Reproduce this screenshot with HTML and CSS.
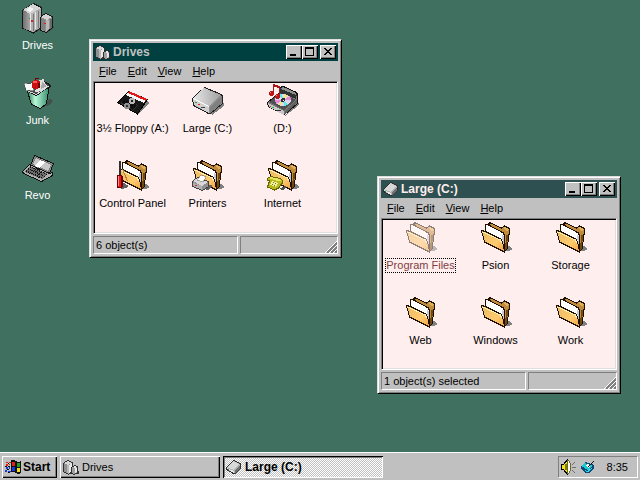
FILE: index.html
```html
<!DOCTYPE html>
<html lang="en">
<head>
<meta charset="utf-8">
<title>Desktop</title>
<link rel="stylesheet" href="styles.css">
</head>
<body>
<svg class="sprite" aria-hidden="true">
  <defs>
    <linearGradient id="flap" x1="0" y1="0" x2="1" y2="1"><stop offset="0" stop-color="#e8b860"/><stop offset=".6" stop-color="#ffcb70"/><stop offset="1" stop-color="#f0a040"/></linearGradient>
    <linearGradient id="tower"><stop offset="0" stop-color="#707070"/><stop offset="1" stop-color="#a8a8a8"/></linearGradient>
    <linearGradient id="lid" x1="0" y1="0" x2="1" y2="0"><stop offset="0" stop-color="#e8e8e8"/><stop offset="1" stop-color="#a0a0a0"/></linearGradient>
    <linearGradient id="bin"><stop offset="0" stop-color="#287858"/><stop offset=".35" stop-color="#b8f8d8"/><stop offset="1" stop-color="#308868"/></linearGradient>
  </defs>
  <symbol id="folder" viewBox="0 0 32 32">
    <path fill="#808080" d="M27 25h3v1h1v1h1v2h-2v1h-4z"/>
    <path fill="#c08c3c" stroke="#201000" d="M9.5 1.5l12 5.500 3-2 5 2.500v5l-1 2-1 13-3 3-15-11z"/>
    <path fill="#704810" d="M26 14h2l-1 13-2 3z"/>
    <path fill="#e0b058" d="M23 7l2-1 4 2v1l-3 1z"/>
    <path fill="#fff" stroke="#201000" d="M5.500 3.500h2l16 8.500 1 3v14l-18-9z"/>
    <path fill="none" stroke="#201000" d="M8.500 2v2l14 7.500"/>
    <path fill="none" stroke="#c8c8d8" d="M22.500 14v5M23.500 15v10"/>
    <path fill="url(#flap)" stroke="#201000" d="M1.500 9.500l4 1 15 7.500 2 2.500 2 10.500-20-10z"/>
    <path fill="none" stroke="#fff0b0" d="M2.500 11l18 8 1 3"/>
  </symbol>
  <symbol id="drive" viewBox="0 0 32 32">
    <path fill="#808080" d="M20 31l12-9v-3l-4 2-9 8z"/>
    <path fill="#909090" stroke="#202020" d="M.5 14.500L12.500 3.500l17 7 1 2v7L18.500 29.500l-2 0L1.500 21.500z"/>
    <path fill="#d0d0d0" d="M1 15l16 8v6L2 21z"/>
    <path fill="#808080" d="M18 23l12-11v7L18 29z"/>
    <path fill="url(#lid)" d="M1 14L12 4l17 7-12 11z"/>
    <path fill="none" stroke="#fff" d="M1 14.500l16 8"/>
    <path fill="#20a040" d="M3 18h2v1H3z"/><path fill="#e02020" d="M6 20h2v1H6z"/>
    <path fill="#404040" d="M9 23h4v1H9z"/>
  </symbol>
  <symbol id="drives" viewBox="0 0 32 32">
    <path fill="#444" fill-opacity=".7" d="M12 31l8-5v-4h-5zM25 31l7-5v-2l-4 1z"/>
    <path fill="#707070" stroke="#181818" d="M.5 8.500L11.500 1.500l8 4v20l-8 5.500-11-5z"/>
    <path fill="url(#tower)" d="M1 9l7 3v17l-7-3z"/>
    <path fill="#b0b0b0" d="M8 12l11-6v19l-8 5-3-1z"/>
    <path fill="#d4d4d4" d="M1 8l10-6 8 4-11 6z"/>
    <path fill="#787878" d="M11 12h1v17h-1zM16 9h1v17h-1z"/>
    <path fill="#e8e8e8" d="M8 12h1v16H8zM13 10h1v17h-1z"/>
    <path fill="#f4f4f4" d="M4 8l4-3 4 2-4 3z"/>
    <path fill="#e02020" d="M9 18h2v2H9z"/><path fill="#109040" d="M7 16h1v1H7z"/>
    <path fill="#909090" stroke="#181818" d="M18.500 15.500l5-4 7 3v11l-6 5-6-2z"/>
    <path fill="#d4d4d4" d="M19 15l5-3 6 3-5 3z"/>
    <path fill="#808080" d="M19 16l4 2v11l-4-2z"/><path fill="#b8b8b8" d="M24 18h3v9l-3 2z"/><path fill="#686868" d="M28 17h2v8l-2 2z"/>
    <path fill="#e02020" d="M22 21h2v1h-2z"/>
  </symbol>
  <symbol id="junk" viewBox="0 0 32 32">
    <path fill="#444" fill-opacity=".7" d="M20 31l9-4 2-4-4-1z"/>
    <path fill="url(#bin)" stroke="#101010" d="M5.500 14.500l9 4 13-10-3 18-6 5-9-4z"/>
    <path fill="#484848" stroke="#181818" d="M4.500 13.500l5-6 12-3 6 3 1 2-14 8z"/>
    <path fill="none" stroke="#d8d8d8" d="M4.500 13.500l10 4 13-9"/>
    <path fill="#f8f8f8" stroke="#404040" stroke-width=".5" d="M2 6l6 1 2-2 2 9-8-1z"/>
    <path fill="#e0e0e0" d="M15 6l2-3h3l1-2 2 5 3 4-6 4-7 1z"/>
    <path fill="#a8a8a8" d="M20 5l5 4-6 3z"/>
    <path fill="#c81010" d="M10 4h2V3h4v1h2v7h-2v1h-4v-1h-2z"/>
    <path fill="#f86060" d="M11 4h4v2h-4z"/><path fill="#700000" d="M16 6h2v5h-2zM13 1h1v2h-1zM14 1h3v1h-3z"/>
  </symbol>
  <symbol id="revo" viewBox="0 0 32 32">
    <path fill="#444" fill-opacity=".7" d="M20 30l11-7v-3l-3 0z"/>
    <path fill="#909090" stroke="#101010" d="M12.500 3.500l19 8-4 10-19-8z"/>
    <path fill="#c8c8c8" stroke="#787878" d="M13.500 5.500l16 7-3 7-16-7z"/>
    <path fill="#fff" d="M18 8l5 2-5 6-5-2z"/>
    <path fill="#b0b0b0" stroke="#101010" d="M7.500 12.500l20 9 3-1v3l-11 6-18-8-1-2z"/>
    <path fill="#707070" d="M8 14l18 8-6 5-17-7z"/>
    <g fill="none" stroke="#111" stroke-width="2" stroke-dasharray="1 1"><path d="M8 14.500l17 8M6 16.500l17 8M4 19l16 7"/></g>
  </symbol>
  <symbol id="floppy" viewBox="0 0 32 32">
    <path fill="#808080" d="M20 31l12-12-2-2z"/>
    <path fill="#181818" stroke="#000" d="M.5 18.500L11.500 7.500l19 8-10 14.500z"/>
    <path fill="#f8f8f8" d="M12 7l18 8-3 4-18-8z"/>
    <path fill="#e01818" d="M12 7l18 8-1 2-18-8z"/>
    <path fill="#383838" d="M3 19l4-4 14 6-5 6z"/>
    <path fill="#101010" d="M4 18l4-3 12 6-4 5z"/>
    <circle cx="15" cy="17" r="3" fill="#b8b8b8"/><circle cx="15" cy="17" r="1" fill="#202020"/>
    <circle cx="10" cy="22" r="3" fill="#909090"/><circle cx="10" cy="22" r="1" fill="#303030"/>
  </symbol>
  <symbol id="cd" viewBox="0 0 32 32">
    <path fill="#808080" d="M18 32l14-11v-2l-3 0z"/>
    <path fill="#787878" stroke="#101010" d="M.5 18.500L12.500 8.500v-5l4-1 13 6 1 2v9l-13 11-16-8z"/>
    <path fill="#303030" d="M13 4l17 6-1 5-16-6z"/>
    <path fill="#909090" d="M16 3l13 6v2L14 5z"/>
    <path fill="#c8c8c8" d="M1 19l16 8v4L2 23z"/><path fill="#606060" d="M18 27l12-11v3L18 30z"/>
    <path fill="#505050" d="M2 18L13 9l16 7-12 10z"/>
    <ellipse cx="16" cy="16" rx="8" ry="6" fill="#e0d8f0"/>
    <path fill="#60e8e8" d="M16 16l-5-5 4-1zM16 16l5 5-4 1z"/><path fill="#e888d8" d="M16 16l7-4 1 4zM16 16l-7 4-1-4z"/><path fill="#f0e870" d="M16 16l1-6 4 2zM16 16l-2 6-3-2z"/>
    <ellipse cx="16" cy="16" rx="2" ry="2" fill="#303030"/><path fill="#fff" d="M16 16h1v1h-1z"/>
    <path fill="#e02020" d="M3 22h1v1H3z"/><path fill="#20c040" d="M5 23h2v1H5z"/><path fill="#303030" d="M9 26h5v1H9z"/>
    <path fill="#a81818" d="M6 0h2v1h3v1h2v10h-1V4h-2V3H7v7H6z"/>
    <path fill="#b81818" d="M3 7h3v1h1v3H6v1H3v-1H2V8h1zM9 10h3v1h1v3h-1v1H9v-1H8v-3h1z"/>
    <path fill="#ff8080" d="M3 8h1v1H3zM9 11h1v1H9z"/>
  </symbol>
  <symbol id="control" viewBox="0 0 32 32">
    <use href="#folder" width="32" height="32"/>
    <path fill="#606060" d="M5 23l7 4-3 2-5 1z"/>
    <path fill="#ffeeee" d="M0 8h4v13H0z"/>
    <path fill="none" stroke="#b08030" d="M5.500 10l5 12"/>
    <path fill="#303030" d="M2 2h2v14H2z"/>
    <path fill="#700000" d="M0 16h5v1h1v11H5v1H0z"/><path fill="#e81818" d="M1 17h3v11H1z"/><path fill="#ff9090" d="M1 17h1v10H1z"/>
  </symbol>
  <symbol id="printers" viewBox="0 0 32 32">
    <use href="#folder" width="32" height="32"/>
    <path fill="#606060" d="M12 30l6-4 3 1-5 4z"/>
    <path fill="#909090" stroke="#404040" d="M.5 22.500l5-4 11 4v5l-6 4-10-4z"/>
    <path fill="#d8d8d8" d="M1 22l5-3 10 4-6 4z"/><path fill="#b0b0b0" d="M1 24l9 3v4l-9-4z"/>
    <path fill="#fff" stroke="#606060" stroke-width=".5" d="M5 21l4-5 5 2-3 5z"/>
    <path fill="#e02020" d="M3 26h2v1H3z"/>
  </symbol>
  <symbol id="internet" viewBox="0 0 32 32">
    <use href="#folder" width="32" height="32"/>
    <path fill="#505050" d="M12 30l6-3 2 1-4 3z"/>
    <path fill="#b8b820" stroke="#686800" d="M.5 19.500l3-2 10 2 2 2v3l-2 1-1 3-5 2.500-7-3 2-6-2-1z"/>
    <path fill="#e8e860" d="M2 19l2-1 9 2 1 2-3 0-7-2z"/>
    <path fill="#f0f0a0" d="M5 22l6 2-2 4-6-2z"/><path fill="#787810" d="M6 23h1v1H6zM8 24h1v1H8zM5 25h1v1H5zM7 26h1v1H7z"/>
  </symbol>
  <symbol id="drive-small" viewBox="0 0 16 16">
    <path fill="#404040" d="M9 15l6-5V8l-2 0z"/>
    <path fill="#b0b0b0" stroke="#303030" d="M.5 8.500l7-7 7 3v4l-6 6-1 0-7-4z"/>
    <path fill="#d8d8d8" d="M1 8l6-6 6 3-5 6z"/>
    <path fill="#e8e8e8" d="M1 9l7 3v2l-7-4z"/><path fill="#707070" d="M9 11l5-5v3l-5 5z"/>
    <path fill="#20a040" d="M2 10h1v1H2z"/>
  </symbol>
  <symbol id="drives-small" viewBox="0 0 16 16">
    <path fill="#303030" d="M6 15h4v-2H7zM13 15h3v-3h-2z"/>
    <path fill="#909090" stroke="#303030" d="M.5 4.500l4-3 5 2v9l-4 3-5-3z"/>
    <path fill="#d8d8d8" d="M1 4l4-2 4 2-4 2z"/><path fill="#b8b8b8" d="M4 6h2v9H5l-1-1z"/><path fill="#e8e8e8" d="M6 6l3-2v8l-3 2z"/>
    <path fill="#a0a0a0" stroke="#303030" d="M8.500 8.500l3-2 3 1v6l-3 2-3-1z"/>
    <path fill="#e8e8e8" d="M9 8l3-1 2 1-2 1zM12 9h2v4l-2 1z"/>
  </symbol>
  <symbol id="flag" viewBox="0 0 16 16">
    <path fill="#101010" d="M6 1h4v1h2v1h3v-1h1v12h-1v1h-3v-1h-2v-1H6z"/>
    <path fill="#e02010" d="M7 3h3v4H7z"/><path fill="#20a020" d="M12 4h3v4h-3z"/><path fill="#1838e0" d="M7 8h3v4H7z"/><path fill="#f8e020" d="M12 9h3v4h-3z"/>
    <path fill="#e02010" d="M1 3h2v1H1zM4 3h2v1H4zM1 5h2v2H1zM4 5h1v1H4z"/><path fill="#1838e0" d="M1 8h2v2H1zM4 8h1v2H4zM0 11h2v2H0zM3 12h3v1H3z"/>
    <path fill="#101010" d="M3 4h1v1H3zM0 7h2v1H0zM3 7h2v1H3zM2 10h2v1H2zM3 13h2v1H3z"/>
  </symbol>
  <symbol id="speaker" viewBox="0 0 16 16">
    <path fill="#f0e020" stroke="#000" d="M.5 5.500h2l4-5v15l-4-5h-2z"/>
    <path fill="#fff" stroke="#686820" d="M6.500 1.500h1l2 3v7l-2 3h-1z"/><path fill="#808000" d="M4 5h2v6H4z"/>
    <path fill="#707070" d="M11 5h1v1h-1zM12 4h1v1h-1zM13 3h1v1h-1zM11 8h4v1h-4zM11 11h1v1h-1zM12 12h1v1h-1zM13 13h1v1h-1z"/>
  </symbol>
  <symbol id="pen" viewBox="0 0 16 16">
    <path fill="#104878" d="M1 7l4-4 9 3v3l-4 5H6l-5-4z"/>
    <path fill="#20c8d0" d="M1 7l4-3 8 3-5 4z"/><path fill="#fff" d="M5 6l3-1 3 2-3 2z"/><path fill="#20e0e8" d="M2 9l5 3 5-3-1 2-3 2H6z"/>
    <path fill="none" stroke="#101010" d="M8 8l6-6"/>
  </symbol>
</svg>

<main class="desktop">
  <div class="shortcuts">
    <button class="item"><svg class="icon"><use href="#drives"/></svg><span class="label">Drives</span></button>
    <button class="item"><svg class="icon"><use href="#junk"/></svg><span class="label">Junk</span></button>
    <button class="item"><svg class="icon"><use href="#revo"/></svg><span class="label">Revo</span></button>
  </div>

  <section class="window window-drives" aria-labelledby="title-drives">
    <header class="titlebar">
      <svg class="small-icon"><use href="#drives-small"/></svg>
      <h2 class="title" id="title-drives">Drives</h2>
      <div class="controls">
        <button class="control" aria-label="Minimize"><svg viewBox="0 0 12 10"><path d="M2 7h6v2H2z"/></svg></button>
        <button class="control" aria-label="Maximize"><svg viewBox="0 0 12 10"><path fill-rule="evenodd" d="M1 0h9v9H1zM2 2h7v6H2z"/></svg></button>
        <button class="control close" aria-label="Close"><svg viewBox="0 0 12 10"><path d="M2 1h2v1h1v1h2V2h1V1h2v1H9v1H8v1H7v1h1v1h1v1h1v1H8V7H7V6H5v1H4v1H2V7h1V6h1V5h1V4H4V3H3V2H2z"/></svg></button>
      </div>
    </header>
    <nav class="menubar">
      <button><u>F</u>ile</button><button><u>E</u>dit</button><button><u>V</u>iew</button><button><u>H</u>elp</button>
    </nav>
    <div class="view">
      <button class="item"><svg class="icon"><use href="#floppy"/></svg><span class="label">3½ Floppy (A:)</span></button>
      <button class="item"><svg class="icon"><use href="#drive"/></svg><span class="label">Large (C:)</span></button>
      <button class="item"><svg class="icon"><use href="#cd"/></svg><span class="label">(D:)</span></button>
      <button class="item"><svg class="icon"><use href="#control"/></svg><span class="label">Control Panel</span></button>
      <button class="item"><svg class="icon"><use href="#printers"/></svg><span class="label">Printers</span></button>
      <button class="item"><svg class="icon"><use href="#internet"/></svg><span class="label">Internet</span></button>
    </div>
    <footer class="statusbar">
      <span class="pane">6 object(s)</span>
      <span class="pane"><svg class="grip" viewBox="0 0 12 12"><path stroke="#fff" d="M0 12L12 0M4 12l8-8M8 12l4-4"/><path stroke="#808080" stroke-width="2" d="M2 12L12 2M6 12l6-6M10 12l2-2"/></svg></span>
    </footer>
  </section>

  <section class="window window-large active" aria-labelledby="title-large">
    <header class="titlebar">
      <svg class="small-icon"><use href="#drive-small"/></svg>
      <h2 class="title" id="title-large">Large (C:)</h2>
      <div class="controls">
        <button class="control" aria-label="Minimize"><svg viewBox="0 0 12 10"><path d="M2 7h6v2H2z"/></svg></button>
        <button class="control" aria-label="Maximize"><svg viewBox="0 0 12 10"><path fill-rule="evenodd" d="M1 0h9v9H1zM2 2h7v6H2z"/></svg></button>
        <button class="control close" aria-label="Close"><svg viewBox="0 0 12 10"><path d="M2 1h2v1h1v1h2V2h1V1h2v1H9v1H8v1H7v1h1v1h1v1h1v1H8V7H7V6H5v1H4v1H2V7h1V6h1V5h1V4H4V3H3V2H2z"/></svg></button>
      </div>
    </header>
    <nav class="menubar">
      <button><u>F</u>ile</button><button><u>E</u>dit</button><button><u>V</u>iew</button><button><u>H</u>elp</button>
    </nav>
    <div class="view">
      <button class="item selected"><svg class="icon"><use href="#folder"/></svg><span class="label">Program Files</span></button>
      <button class="item"><svg class="icon"><use href="#folder"/></svg><span class="label">Psion</span></button>
      <button class="item"><svg class="icon"><use href="#folder"/></svg><span class="label">Storage</span></button>
      <button class="item"><svg class="icon"><use href="#folder"/></svg><span class="label">Web</span></button>
      <button class="item"><svg class="icon"><use href="#folder"/></svg><span class="label">Windows</span></button>
      <button class="item"><svg class="icon"><use href="#folder"/></svg><span class="label">Work</span></button>
    </div>
    <footer class="statusbar">
      <span class="pane">1 object(s) selected</span>
      <span class="pane"><svg class="grip" viewBox="0 0 12 12"><path stroke="#fff" d="M0 12L12 0M4 12l8-8M8 12l4-4"/><path stroke="#808080" stroke-width="2" d="M2 12L12 2M6 12l6-6M10 12l2-2"/></svg></span>
    </footer>
  </section>
</main>

<footer class="taskbar">
  <button class="task start"><svg class="small-icon"><use href="#flag"/></svg><span>Start</span></button>
  <button class="task entry"><svg class="small-icon"><use href="#drives-small"/></svg><span>Drives</span></button>
  <button class="task entry pressed"><svg class="small-icon"><use href="#drive-small"/></svg><span>Large (C:)</span></button>
  <div class="tray">
    <svg class="small-icon"><use href="#speaker"/></svg>
    <svg class="small-icon"><use href="#pen"/></svg>
    <time>8:35</time>
  </div>
</footer>
</body>
</html>
```
FILE: styles.css
```css
:root {
  --face: #c0c0c0;
  --light: #dfdfdf;
  --shade: #808080;
  --paper: #ffeeee;
  --ui: 11px/15px "Liberation Sans", sans-serif;
  --ui-bold: bold 12px/15px "Liberation Sans", sans-serif;
}

* { box-sizing: border-box; }

body {
  margin: 0;
  min-height: 100vh;
  display: flex;
  flex-direction: column;
  background: #407060;
  color: #000;
  font: var(--ui);
}

button {
  margin: 0;
  padding: 0;
  border: 0;
  background: none;
  color: inherit;
  font: inherit;
}

svg { flex: none; shape-rendering: crispEdges; }
.sprite { position: absolute; width: 0; height: 0; }
.icon { width: 32px; height: 32px; }
.small-icon { width: 16px; height: 16px; }

.desktop { position: relative; flex: 1; }

.shortcuts {
  display: flex;
  flex-direction: column;
  align-items: flex-start;
  padding-top: 1px;
  color: #fff;
}

.item {
  width: 75px;
  height: 75px;
  padding-top: 1px;
  display: flex;
  flex-direction: column;
  align-items: center;
  gap: 5px;
}
.shortcuts .item { gap: 4px; }

.label { border: 1px solid transparent; white-space: nowrap; line-height: 13px; }
.selected { color: #804040; }
.selected .icon { opacity: .5; }
.selected .label { border: 1px dotted #000; }

/* Windows */
.window {
  position: absolute;
  padding: 3px;
  border: 1px solid;
  border-color: var(--light) #000 #000 var(--light);
  background: var(--face);
  box-shadow: inset 1px 1px #fff, inset -1px -1px var(--shade);
  display: flex;
  flex-direction: column;
}
.window-drives { left: 89px; top: 39px; width: 253px; height: 219px; }
.window-large { left: 377px; top: 176px; width: 244px; height: 218px; }

.titlebar {
  flex: none;
  display: flex;
  align-items: center;
  gap: 2px;
  height: 18px;
  padding: 0 2px;
  background: #004040;
  color: var(--face);
}
.active .titlebar { background: #2f5050; color: var(--paper); }
.title { flex: 1; margin: 0; font: var(--ui-bold); }

.controls { display: flex; }
.control {
  width: 16px;
  height: 14px;
  padding: 2px;
  display: flex;
  background: var(--face);
  box-shadow: inset 1px 1px #fff, inset -1px -1px #000, inset -2px -2px var(--shade);
}
.control svg { width: 12px; height: 10px; }
.close { margin-left: 2px; }

.menubar { flex: none; display: flex; height: 20px; }
.menubar button { padding: 0 5px 0 6px; }

.view {
  flex: 1;
  min-height: 0;
  display: grid;
  grid-template-columns: repeat(3, 75px);
  align-content: start;
  padding: 1px;
  background: var(--paper);
  border: 1px solid;
  border-color: var(--shade) #fff #fff var(--shade);
  box-shadow: inset 1px 1px #000, inset -1px -1px var(--light);
}

.statusbar { display: grid; grid-template-columns: 145px 1fr; gap: 2px; margin-top: 2px; }
.pane {
  display: flex;
  height: 18px;
  padding-left: 2px;
  border: 1px solid;
  border-color: var(--shade) #fff #fff var(--shade);
  line-height: 17px;
}
.grip { width: 12px; height: 12px; margin: auto 0 0 auto; }

/* Taskbar */
.taskbar {
  display: flex;
  gap: 3px;
  padding: 3px 2px 2px;
  border-top: 1px solid #fff;
  background: var(--face);
}
.task {
  display: flex;
  align-items: center;
  gap: 2px;
  height: 22px;
  padding: 0 3px;
  box-shadow: inset 1px 1px #fff, inset -1px -1px #000, inset -2px -2px var(--shade);
}
.start { font: var(--ui-bold); width: 55px; }
.entry { flex: 0 1 160px; gap: 3px; }
.pressed {
  font: var(--ui-bold);
  background: repeating-conic-gradient(#fff 0 25%, var(--face) 0 50%) 0 0 / 2px 2px;
  box-shadow: inset 1px 1px #000, inset -1px -1px #fff, inset 2px 2px var(--shade);
}
.tray {
  display: flex;
  align-items: center;
  gap: 3px;
  margin-left: auto;
  height: 22px;
  padding: 0 9px 0 2px;
  border: 1px solid;
  border-color: var(--shade) #fff #fff var(--shade);
}
.tray time { margin-left: 8px; }
```
